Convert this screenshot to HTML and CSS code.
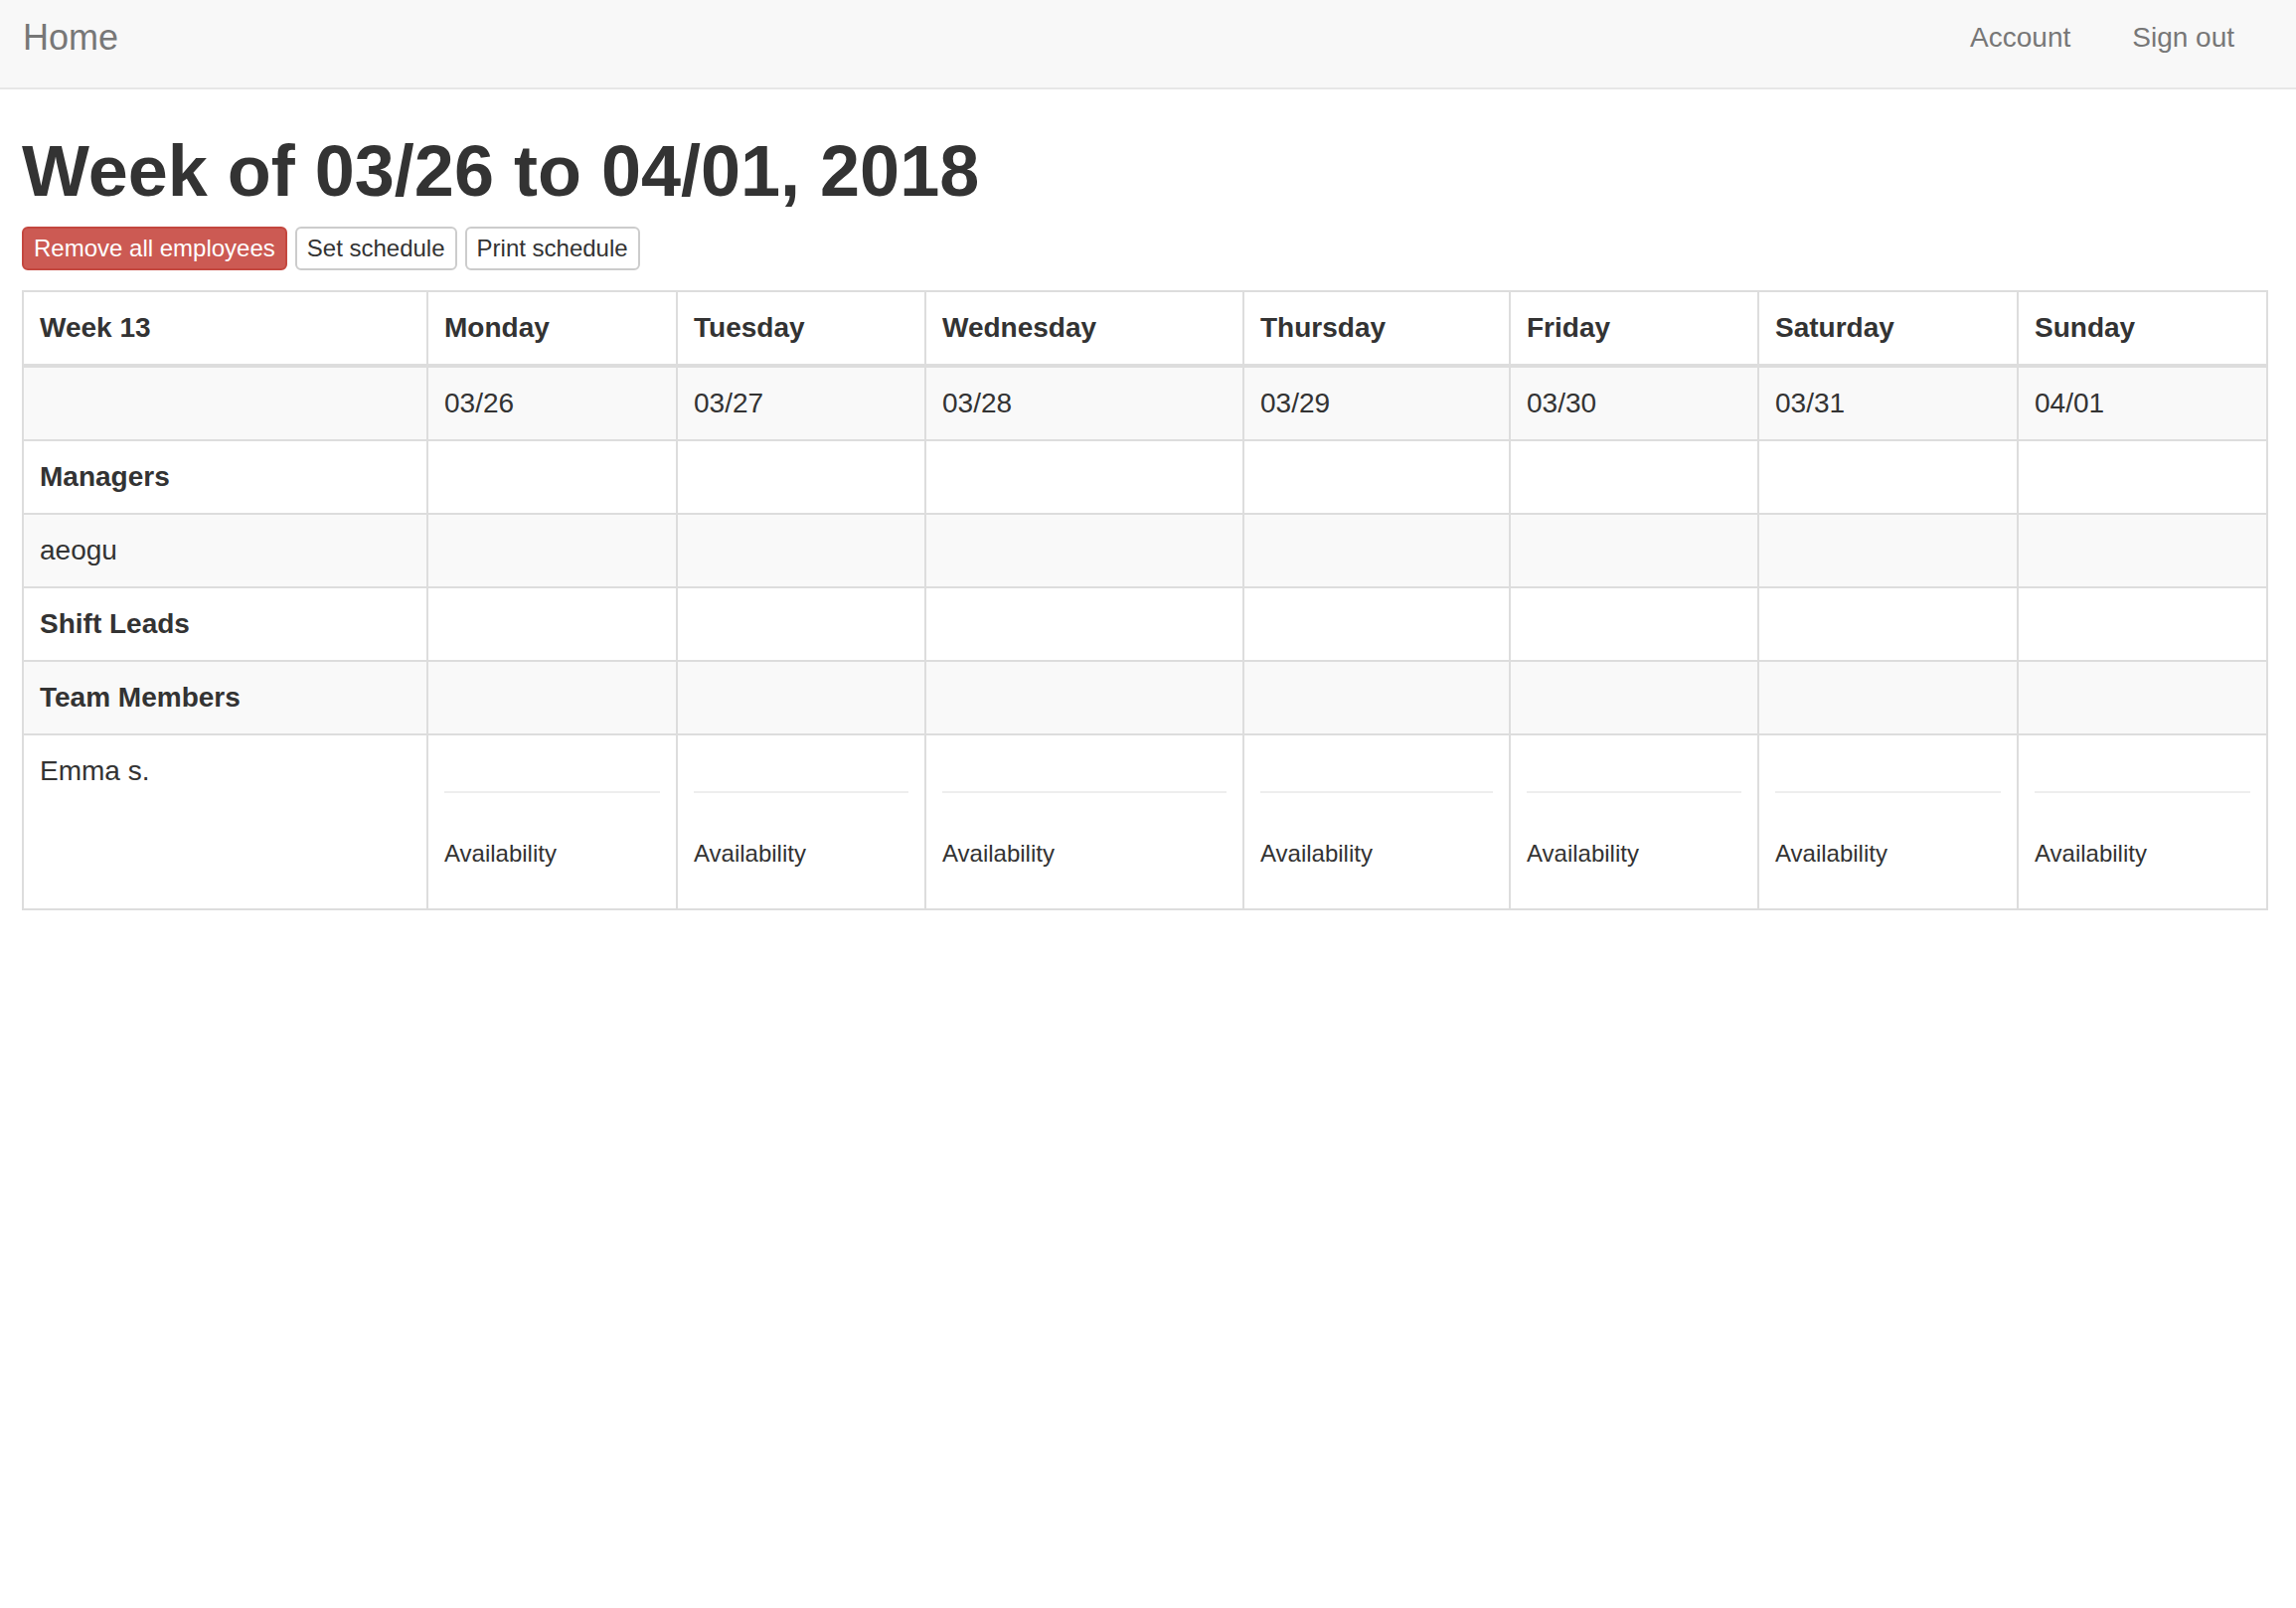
FILE: index.html
```html
<!DOCTYPE html>
<html lang="en">
<head>
<meta charset="utf-8">
<title>Schedule</title>
<link rel="stylesheet" href="styles.css">
</head>
<body>
<nav class="navbar">
  <a class="brand" href="#">Home</a>
  <ul class="nav-links">
    <li><a href="#">Account</a></li>
    <li><a href="#">Sign out</a></li>
  </ul>
</nav>
<main class="container">
  <h1 class="title">Week of 03/26 to 04/01, 2018</h1>
  <div class="actions">
    <button class="btn btn-danger">Remove all employees</button>
    <button class="btn">Set schedule</button>
    <button class="btn">Print schedule</button>
  </div>
  <table class="schedule">
    <colgroup>
      <col class="w-name">
      <col class="w-mon">
      <col class="w-tue">
      <col class="w-wed">
      <col class="w-thu">
      <col class="w-fri">
      <col class="w-sat">
      <col class="w-sun">
    </colgroup>
    <thead>
      <tr>
        <th>Week 13</th>
        <th>Monday</th>
        <th>Tuesday</th>
        <th>Wednesday</th>
        <th>Thursday</th>
        <th>Friday</th>
        <th>Saturday</th>
        <th>Sunday</th>
      </tr>
    </thead>
    <tbody>
      <tr>
        <td></td>
        <td>03/26</td>
        <td>03/27</td>
        <td>03/28</td>
        <td>03/29</td>
        <td>03/30</td>
        <td>03/31</td>
        <td>04/01</td>
      </tr>
      <tr>
        <th>Managers</th>
        <td></td><td></td><td></td><td></td><td></td><td></td><td></td>
      </tr>
      <tr>
        <td>aeogu</td>
        <td></td><td></td><td></td><td></td><td></td><td></td><td></td>
      </tr>
      <tr>
        <th>Shift Leads</th>
        <td></td><td></td><td></td><td></td><td></td><td></td><td></td>
      </tr>
      <tr>
        <th>Team Members</th>
        <td></td><td></td><td></td><td></td><td></td><td></td><td></td>
      </tr>
      <tr class="employee">
        <td>Emma s.</td>
        <td><hr class="divider"><div class="avail"><span>Availability</span></div></td>
        <td><hr class="divider"><div class="avail"><span>Availability</span></div></td>
        <td><hr class="divider"><div class="avail"><span>Availability</span></div></td>
        <td><hr class="divider"><div class="avail"><span>Availability</span></div></td>
        <td><hr class="divider"><div class="avail"><span>Availability</span></div></td>
        <td><hr class="divider"><div class="avail"><span>Availability</span></div></td>
        <td><hr class="divider"><div class="avail"><span>Availability</span></div></td>
      </tr>
    </tbody>
  </table>
</main>
</body>
</html>
```

FILE: styles.css
```css
* {
  box-sizing: border-box;
}

html, body {
  margin: 0;
  padding: 0;
  background: #ffffff;
}

body {
  font-family: "Liberation Sans", Arial, Helvetica, sans-serif;
  font-size: 28px;
  line-height: 40px;
  color: #333333;
}

a {
  text-decoration: none;
}

.navbar {
  display: flex;
  justify-content: space-between;
  align-items: flex-start;
  height: 90px;
  padding: 18px 31px 0 23px;
  background: #f8f8f8;
  border-bottom: 2px solid #e7e7e7;
}

.brand {
  font-size: 36px;
  line-height: 40px;
  color: #777777;
}

.nav-links {
  display: flex;
  list-style: none;
  margin: 0;
  padding: 0;
}

.nav-links a {
  display: block;
  padding: 0 31px;
  font-size: 28px;
  line-height: 40px;
  color: #777777;
}

.container {
  padding: 0 28px 0 22px;
}

.title {
  margin: 42px 0 16px;
  font-size: 72px;
  line-height: 80px;
  font-weight: 700;
  color: #333333;
}

.actions {
  display: flex;
  gap: 8px;
}

.btn {
  height: 44px;
  padding: 2px 10px;
  font-family: inherit;
  font-size: 24px;
  line-height: 36px;
  color: #333333;
  background: #ffffff;
  border: 2px solid #cccccc;
  border-radius: 6px;
  cursor: pointer;
}

.btn-danger {
  color: #ffffff;
  background: #cc5a53;
  border-color: #c4473f;
}

.schedule {
  margin-top: 20px;
  width: 2260px;
  table-layout: fixed;
  border-collapse: collapse;
  border: 2px solid #dddddd;
}

.w-name { width: 407px; }
.w-mon { width: 251px; }
.w-tue { width: 250px; }
.w-wed { width: 320px; }
.w-thu { width: 268px; }
.w-fri { width: 250px; }
.w-sat { width: 261px; }
.w-sun { width: 251px; }

.schedule th,
.schedule td {
  padding: 16px;
  text-align: left;
  vertical-align: top;
  line-height: 40px;
  border: 2px solid #dddddd;
}

.schedule th {
  font-weight: 700;
}

.schedule thead th {
  vertical-align: bottom;
  border-bottom: 4px solid #dddddd;
}

.schedule tbody tr:nth-child(odd) {
  background: #f9f9f9;
}

.divider {
  margin: 40px 0;
  height: 0;
  border: 0;
  border-top: 2px solid #eeeeee;
}

.avail {
  margin-bottom: 19px;
  font-size: 28px;
  line-height: 40px;
}

.avail span {
  font-size: 24px;
}
```
